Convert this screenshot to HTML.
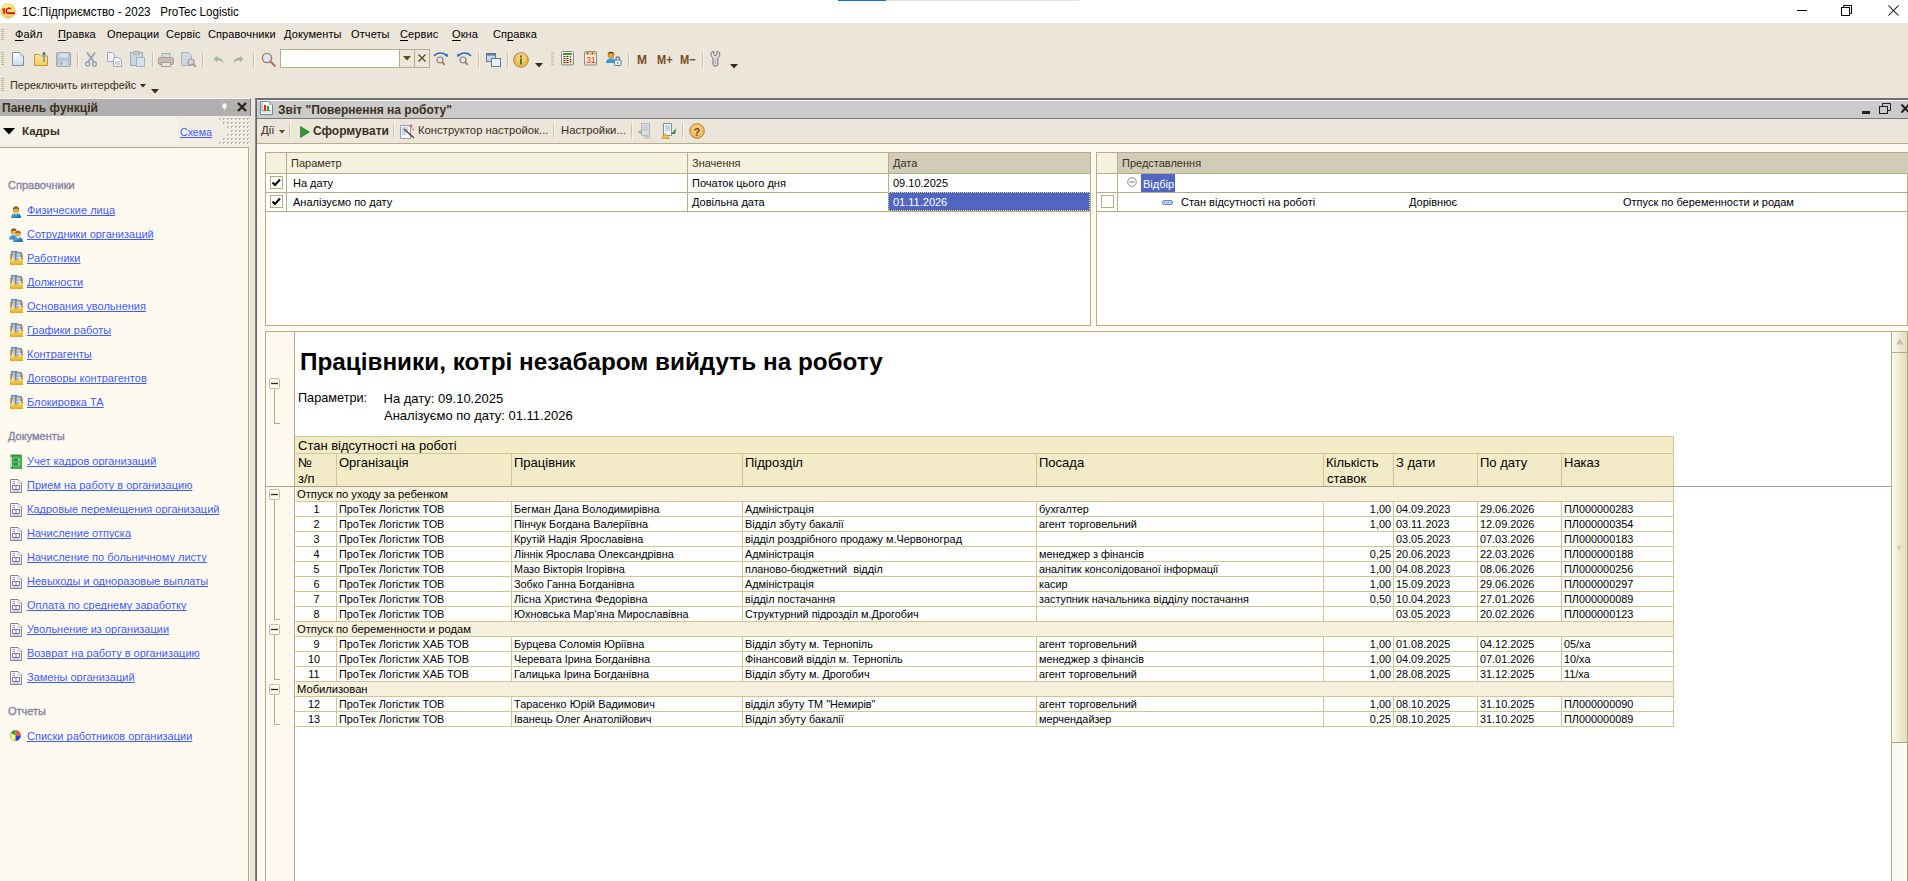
<!DOCTYPE html><html><head><meta charset='utf-8'><style>
*{margin:0;padding:0;box-sizing:border-box}
html,body{width:1908px;height:881px;overflow:hidden;background:#ECE5DA;font-family:"Liberation Sans",sans-serif}
body>div,div.a{position:absolute}
div{position:absolute}
.t{white-space:nowrap;line-height:1}
u{text-underline-offset:2px}
.ui{font-size:11px;color:#000}
.lnk{color:#3030E0;text-decoration:underline;font-size:11px}
</style></head><body><div style="left:0px;top:0px;width:1908px;height:23px;background:#fff"></div>
<div style="left:838px;top:0px;width:48px;height:1px;background:#0B6FD8"></div>
<div style="left:886px;top:0px;width:193px;height:1px;background:#E0E0E0"></div>
<svg style="position:absolute;left:0;top:3px" width="17" height="17" viewBox="0 0 17 17"><defs><radialGradient id="g1c" cx="0.45" cy="0.35" r="0.6"><stop offset="0" stop-color="#FFFDE0"/><stop offset="0.5" stop-color="#F8EC60"/><stop offset="1" stop-color="#E8C870"/></radialGradient></defs><circle cx="8" cy="8" r="7.4" fill="url(#g1c)" stroke="#D8C890" stroke-width="0.6"/><path d="M2.2 6L4.8 4.8V11H3.2V7L2.2 7.4Z" fill="#E81010"/><path d="M10.8 6.2A2.6 2.6 0 1 0 8.5 10.4" fill="none" stroke="#E81010" stroke-width="1.7"/><rect x="8" y="9.3" width="7" height="1.8" fill="#E80000"/></svg>
<div class="t" style="left:22px;top:5.7px;font-size:12.5px;color:#000;transform:scaleX(0.928);transform-origin:left">1С:Підприємство - 2023&nbsp;&nbsp; ProTec Logistic</div>
<div style="left:1797px;top:10px;width:10px;height:1px;background:#000"></div>
<svg style="position:absolute;left:1841px;top:5px" width="12" height="12" viewBox="0 0 12 12"><rect x="0.5" y="2.5" width="8" height="8" fill="none" stroke="#000"/><path d="M2.5 2.5V0.5H10.5V8.5H8.5" fill="none" stroke="#000"/></svg>
<svg style="position:absolute;left:1888px;top:5px" width="11" height="11" viewBox="0 0 11 11"><path d="M0.5 0.5L10.5 10.5M10.5 0.5L0.5 10.5" stroke="#000" stroke-width="1.05"/></svg>
<div style="left:1px;top:29px;width:3px;height:1px;background:#BDB494"></div>
<div style="left:1px;top:31px;width:3px;height:1px;background:#BDB494"></div>
<div style="left:1px;top:33px;width:3px;height:1px;background:#BDB494"></div>
<div style="left:1px;top:35px;width:3px;height:1px;background:#BDB494"></div>
<div style="left:1px;top:37px;width:3px;height:1px;background:#BDB494"></div>
<div style="left:1px;top:39px;width:3px;height:1px;background:#BDB494"></div>
<div class="t" style="left:15px;top:29px;font-size:11px;color:#000;letter-spacing:0.1px"><u>Ф</u>айл</div>
<div class="t" style="left:58px;top:29px;font-size:11px;color:#000;letter-spacing:0.1px"><u>П</u>равка</div>
<div class="t" style="left:107px;top:29px;font-size:11px;color:#000;letter-spacing:0.1px">Операции</div>
<div class="t" style="left:166px;top:29px;font-size:11px;color:#000;letter-spacing:0.1px">Сервіс</div>
<div class="t" style="left:208px;top:29px;font-size:11px;color:#000;letter-spacing:0.1px">Справочники</div>
<div class="t" style="left:284px;top:29px;font-size:11px;color:#000;letter-spacing:0.1px">Документы</div>
<div class="t" style="left:351px;top:29px;font-size:11px;color:#000;letter-spacing:0.1px">Отчеты</div>
<div class="t" style="left:400px;top:29px;font-size:11px;color:#000;letter-spacing:0.1px"><u>С</u>ервис</div>
<div class="t" style="left:452px;top:29px;font-size:11px;color:#000;letter-spacing:0.1px"><u>О</u>кна</div>
<div class="t" style="left:493px;top:29px;font-size:11px;color:#000;letter-spacing:0.1px">Сп<u>р</u>авка</div>
<svg style="position:absolute;left:12px;top:52px" width="12" height="14" viewBox="0 0 12 14"><defs><linearGradient id="nd" x1="0" y1="0" x2="0" y2="1"><stop offset="0" stop-color="#FFFFFF"/><stop offset="1" stop-color="#C8DCEC"/></linearGradient></defs><path d="M0.5 0.5H8L11.5 4V13.5H0.5Z" fill="url(#nd)" stroke="#7A90A8"/><path d="M8 0.5V4H11.5" fill="#D8E4EE" stroke="#9AB0C4" stroke-width="0.8"/></svg>
<svg style="position:absolute;left:34px;top:51px" width="15" height="15" viewBox="0 0 15 15"><defs><linearGradient id="fd" x1="0" y1="0" x2="0" y2="1"><stop offset="0" stop-color="#FBE9A8"/><stop offset="1" stop-color="#F0CC58"/></linearGradient></defs><path d="M0.5 3.5H5L6.5 5H13.5V14.5H0.5Z" fill="url(#fd)" stroke="#C8982E"/><path d="M10 11V1.2" stroke="#3A6A90" stroke-width="1"/><path d="M7.8 3.4L10 0.8L12.2 3.4Z" fill="#3A6A90"/></svg>
<svg style="position:absolute;left:56px;top:52px" width="15" height="15" viewBox="0 0 15 15"><rect x="0.5" y="0.5" width="14" height="14" rx="1" fill="#B4C4D4" stroke="#9AAABA"/><rect x="3" y="1.5" width="9" height="4" fill="#D8E2EA"/><rect x="3" y="9" width="9" height="5" fill="#D0D8E0"/><rect x="4.5" y="10" width="2" height="3" fill="#9AAABA"/></svg>
<div style="left:77px;top:50px;width:1px;height:20px;background:linear-gradient(#ECE5DA,#C9BFA0 30%,#C9BFA0 70%,#ECE5DA)"></div>
<div style="left:78px;top:50px;width:1px;height:20px;background:#FFFFFF80"></div>
<svg style="position:absolute;left:85px;top:52px" width="12" height="15" viewBox="0 0 12 15"><path d="M2 0.5L9 10M10 0.5L3 10" stroke="#8AA0B4" stroke-width="1.6" fill="none"/><circle cx="2.6" cy="12" r="2" fill="none" stroke="#8AA0B4" stroke-width="1.3"/><circle cx="9.4" cy="12" r="2" fill="none" stroke="#8AA0B4" stroke-width="1.3"/></svg>
<svg style="position:absolute;left:107px;top:52px" width="15" height="15" viewBox="0 0 15 15"><path d="M0.5 0.5H5.5L7.5 2.5V9.5H0.5Z" fill="#F2F4F6" stroke="#9AAABA"/><path d="M6.5 5.5H11.5L14.5 8.5V14.5H6.5Z" fill="#F2F4F6" stroke="#9AAABA"/><path d="M8 10H13M8 12H13" stroke="#A8B4C0"/></svg>
<svg style="position:absolute;left:130px;top:51px" width="15" height="16" viewBox="0 0 15 16"><rect x="0.5" y="1.5" width="12" height="13" fill="#C8D4E0" stroke="#9AAABA"/><rect x="4" y="0.5" width="5" height="2.5" fill="#D8D8B8" stroke="#A8A890"/><rect x="6.5" y="6.5" width="8" height="9" fill="#D8E2EA" stroke="#9ABAC0"/></svg>
<div style="left:152px;top:50px;width:1px;height:20px;background:linear-gradient(#ECE5DA,#C9BFA0 30%,#C9BFA0 70%,#ECE5DA)"></div>
<div style="left:153px;top:50px;width:1px;height:20px;background:#FFFFFF80"></div>
<svg style="position:absolute;left:158px;top:53px" width="16" height="14" viewBox="0 0 16 14"><rect x="4" y="0.5" width="8" height="4" fill="#D4DCE4" stroke="#A0AAB4"/><rect x="0.5" y="4.5" width="15" height="7" rx="1.5" fill="#C8BCB0" stroke="#A8A098"/><rect x="3.5" y="9.5" width="9" height="4" fill="#E8E4E0" stroke="#A8A098"/></svg>
<svg style="position:absolute;left:181px;top:52px" width="16" height="15" viewBox="0 0 16 15"><path d="M0.5 0.5H7.5L10.5 3.5V13.5H0.5Z" fill="#D0D8E0" stroke="#A8B4C0"/><circle cx="10" cy="10" r="3" fill="#C8D8E8" stroke="#B09080" stroke-width="1.2"/><path d="M12 12L15 15" stroke="#B09080" stroke-width="1.8"/></svg>
<div style="left:202px;top:50px;width:1px;height:20px;background:linear-gradient(#ECE5DA,#C9BFA0 30%,#C9BFA0 70%,#ECE5DA)"></div>
<div style="left:203px;top:50px;width:1px;height:20px;background:#FFFFFF80"></div>
<svg style="position:absolute;left:213px;top:55px" width="11" height="9" viewBox="0 0 11 9"><path d="M4 0.5L0.5 4L4 7.5V5.5C7 5.5 9 6 10.5 8.5C10 4.5 8 2.5 4 2.5Z" fill="#A8B8A0"/></svg>
<svg style="position:absolute;left:233px;top:55px" width="11" height="9" viewBox="0 0 11 9"><path d="M7 0.5L10.5 4L7 7.5V5.5C4 5.5 2 6 0.5 8.5C1 4.5 3 2.5 7 2.5Z" fill="#A8B8A0"/></svg>
<div style="left:253px;top:50px;width:1px;height:20px;background:linear-gradient(#ECE5DA,#C9BFA0 30%,#C9BFA0 70%,#ECE5DA)"></div>
<div style="left:254px;top:50px;width:1px;height:20px;background:#FFFFFF80"></div>
<svg style="position:absolute;left:261px;top:52px" width="15" height="15" viewBox="0 0 15 15"><circle cx="6" cy="6" r="4.6" fill="#D8E8F8" stroke="#B07858" stroke-width="1.4"/><path d="M9.5 9.5L13.8 13.8" stroke="#B07858" stroke-width="2.2" stroke-linecap="round"/></svg>
<div style="left:280px;top:49px;width:120px;height:19px;background:#fff;border:1px solid #B5AC88"></div>
<div style="left:399px;top:49px;width:16px;height:19px;border:1px solid #B5AC88"></div>
<svg style="position:absolute;left:403px;top:56px" width="8" height="5" viewBox="0 0 8 5"><path d="M0 0H8L4 4.5Z" fill="#5A4A20"/></svg>
<div style="left:414px;top:49px;width:16px;height:19px;border:1px solid #B5AC88"></div>
<svg style="position:absolute;left:418px;top:54px" width="8" height="8" viewBox="0 0 8 8"><path d="M0.5 0.5L7.5 7.5M7.5 0.5L0.5 7.5" stroke="#5A4A20" stroke-width="1.3"/></svg>
<svg style="position:absolute;left:433px;top:51px" width="16" height="16" viewBox="0 0 16 16"><path d="M1 5C4 1 11 1 14 5" fill="none" stroke="#2A70C8" stroke-width="1.3"/><path d="M15 6L14.5 2.5L11.5 4.5Z" fill="#2A70C8"/><circle cx="7" cy="9" r="3" fill="#D8E8F8" stroke="#9A7A68" stroke-width="1.2"/><path d="M9.2 11.2L11.8 13.8" stroke="#9A7A68" stroke-width="1.8"/></svg>
<svg style="position:absolute;left:456px;top:51px" width="16" height="16" viewBox="0 0 16 16"><path d="M2 5C5 1 12 1 15 5" fill="none" stroke="#2A70C8" stroke-width="1.3"/><path d="M1 6L1.5 2.5L4.5 4.5Z" fill="#2A70C8"/><circle cx="7" cy="9" r="3" fill="#D8E8F8" stroke="#9A7A68" stroke-width="1.2"/><path d="M9.2 11.2L11.8 13.8" stroke="#9A7A68" stroke-width="1.8"/></svg>
<div style="left:478px;top:50px;width:1px;height:20px;background:linear-gradient(#ECE5DA,#C9BFA0 30%,#C9BFA0 70%,#ECE5DA)"></div>
<div style="left:479px;top:50px;width:1px;height:20px;background:#FFFFFF80"></div>
<svg style="position:absolute;left:486px;top:53px" width="15" height="14" viewBox="0 0 15 14"><rect x="0.5" y="0.5" width="9" height="8" fill="#C8D8E8" stroke="#5A7A9A"/><rect x="0.5" y="0.5" width="9" height="2" fill="#5A7A9A"/><rect x="5.5" y="5.5" width="9" height="8" fill="#E8F0F8" stroke="#5A7A9A"/></svg>
<div style="left:507px;top:50px;width:1px;height:20px;background:linear-gradient(#ECE5DA,#C9BFA0 30%,#C9BFA0 70%,#ECE5DA)"></div>
<div style="left:508px;top:50px;width:1px;height:20px;background:#FFFFFF80"></div>
<svg style="position:absolute;left:513px;top:52px" width="16" height="16" viewBox="0 0 16 16"><circle cx="8" cy="8" r="7.3" fill="#F2B850" stroke="#A88440"/><circle cx="8" cy="6" r="5" fill="#F8D890" opacity="0.6"/><rect x="7" y="6.5" width="2" height="6" fill="#2C8A2C"/><rect x="7" y="3.5" width="2" height="2" fill="#2C8A2C"/></svg>
<svg style="position:absolute;left:535px;top:63px" width="8" height="5" viewBox="0 0 8 5"><path d="M0 0H8L4 4.5Z" fill="#3A2A10"/></svg>
<div style="left:551px;top:52px;width:3px;height:1px;background:#C8C0A0"></div>
<div style="left:551px;top:54px;width:3px;height:1px;background:#C8C0A0"></div>
<div style="left:551px;top:56px;width:3px;height:1px;background:#C8C0A0"></div>
<div style="left:551px;top:58px;width:3px;height:1px;background:#C8C0A0"></div>
<div style="left:551px;top:60px;width:3px;height:1px;background:#C8C0A0"></div>
<div style="left:551px;top:62px;width:3px;height:1px;background:#C8C0A0"></div>
<div style="left:551px;top:64px;width:3px;height:1px;background:#C8C0A0"></div>
<svg style="position:absolute;left:561px;top:51px" width="14" height="15" viewBox="0 0 14 15"><defs><linearGradient id="cg" x1="0" y1="0" x2="0" y2="1"><stop offset="0" stop-color="#FFFFFF"/><stop offset="1" stop-color="#F8D8A8"/></linearGradient></defs><rect x="0.5" y="0.5" width="12" height="13.5" rx="1" fill="url(#cg)" stroke="#7A8A98"/><rect x="2" y="2" width="9" height="2" fill="#3A9A2A"/><path d="M2.5 5.5H4.5M5.5 5.5H7.5M2.5 7.5H4.5M5.5 7.5H7.5M2.5 9.5H4.5M5.5 9.5H7.5M2.5 11.5H4.5M5.5 11.5H7.5" stroke="#302820" stroke-width="1"/><path d="M9.5 5V6.5" stroke="#E02020" stroke-width="1.2"/><circle cx="9.5" cy="8.5" r="0.8" fill="#302820"/><circle cx="9.5" cy="10.5" r="0.8" fill="#302820"/></svg>
<svg style="position:absolute;left:584px;top:51px" width="13" height="15" viewBox="0 0 13 15"><defs><linearGradient id="kg" x1="0" y1="0" x2="0" y2="1"><stop offset="0" stop-color="#FFFFFF"/><stop offset="1" stop-color="#F8DCB0"/></linearGradient></defs><rect x="0.5" y="0.5" width="12" height="13.5" rx="1" fill="url(#kg)" stroke="#8A9098"/><rect x="1" y="1" width="11" height="3" fill="#F0C070"/><circle cx="3.5" cy="2.3" r="0.7" fill="#503010"/><circle cx="8.5" cy="2.3" r="0.7" fill="#503010"/><text x="2.2" y="12.2" font-family="Liberation Sans" font-size="8.5" fill="#E83020" transform="scale(1,1.1)" transform-origin="0 12">31</text></svg>
<svg style="position:absolute;left:606px;top:51px" width="16" height="15" viewBox="0 0 16 15"><defs><radialGradient id="hg" cx="0.5" cy="0.6" r="0.6"><stop offset="0" stop-color="#F8C050"/><stop offset="1" stop-color="#B86810"/></radialGradient></defs><circle cx="5" cy="4" r="3.3" fill="url(#hg)"/><path d="M1.8 3C2 0.5 8 0.5 8.2 3C7 1.8 3 1.8 1.8 3Z" fill="#201008"/><path d="M0 12C0.3 8.5 2 7.6 5 7.6C8 7.6 9 8.2 9 10V12Z" fill="#3898D8"/><rect x="8.5" y="9" width="6.5" height="5.5" rx="0.8" fill="#E8F0F8" stroke="#5A7890"/><path d="M10 9V7.2C10 5.5 13.5 5.5 13.5 7.2V9" fill="none" stroke="#5A7890" stroke-width="1.3"/><path d="M11.75 11V13" stroke="#5A7890"/></svg>
<div style="left:628px;top:50px;width:1px;height:20px;background:linear-gradient(#ECE5DA,#C9BFA0 30%,#C9BFA0 70%,#ECE5DA)"></div>
<div style="left:629px;top:50px;width:1px;height:20px;background:#FFFFFF80"></div>
<div class="t" style="left:636.5px;top:53px;font-size:13px;font-weight:bold;color:#7A4A20;transform:scaleX(0.92);transform-origin:left">M</div>
<div class="t" style="left:656.5px;top:53px;font-size:13px;font-weight:bold;color:#7A4A20;transform:scaleX(0.85);transform-origin:left">M+</div>
<div class="t" style="left:679.5px;top:53px;font-size:13px;font-weight:bold;color:#7A4A20;transform:scaleX(0.85);transform-origin:left">M&minus;</div>
<div style="left:702px;top:50px;width:1px;height:20px;background:linear-gradient(#ECE5DA,#C9BFA0 30%,#C9BFA0 70%,#ECE5DA)"></div>
<div style="left:703px;top:50px;width:1px;height:20px;background:#FFFFFF80"></div>
<svg style="position:absolute;left:710px;top:51px" width="11" height="16" viewBox="0 0 11 16"><defs><linearGradient id="wg" x1="0" y1="0" x2="1" y2="0"><stop offset="0" stop-color="#F4F4F4"/><stop offset="0.5" stop-color="#D8D8D8"/><stop offset="1" stop-color="#F0F0F0"/></linearGradient></defs><path d="M1 3.2C1 1.2 2.5 0.5 3.8 0.5V3.8C3.8 4.8 6.8 4.8 6.8 3.8V0.5C8.2 0.5 9.8 1.2 9.8 3.2C9.8 5 8.8 6.3 7.8 7V13.8C7.8 15.5 3 15.5 3 13.8V7C2 6.3 1 5 1 3.2Z" fill="url(#wg)" stroke="#6A6A6A" stroke-width="1"/><path d="M5.4 9V13" stroke="#B0B0B0" stroke-width="1.2"/></svg>
<svg style="position:absolute;left:730px;top:63.5px" width="8" height="5" viewBox="0 0 8 5"><path d="M0 0H8L4 4.5Z" fill="#3A2A10"/></svg>
<svg style="position:absolute;left:140px;top:84px" width="6" height="4" viewBox="0 0 6 4"><path d="M0 0H6L3 3.5Z" fill="#3A2A10"/></svg>
<svg style="position:absolute;left:151px;top:89px" width="8" height="5" viewBox="0 0 8 5"><path d="M0 0H8L4 4.5Z" fill="#3A2A10"/></svg>
<div style="left:1px;top:52px;width:3px;height:1px;background:#BDB494"></div>
<div style="left:1px;top:54px;width:3px;height:1px;background:#BDB494"></div>
<div style="left:1px;top:56px;width:3px;height:1px;background:#BDB494"></div>
<div style="left:1px;top:58px;width:3px;height:1px;background:#BDB494"></div>
<div style="left:1px;top:60px;width:3px;height:1px;background:#BDB494"></div>
<div style="left:1px;top:62px;width:3px;height:1px;background:#BDB494"></div>
<div style="left:1px;top:64px;width:3px;height:1px;background:#BDB494"></div>
<div style="left:1px;top:78px;width:3px;height:1px;background:#BDB494"></div>
<div style="left:1px;top:80px;width:3px;height:1px;background:#BDB494"></div>
<div style="left:1px;top:82px;width:3px;height:1px;background:#BDB494"></div>
<div style="left:1px;top:84px;width:3px;height:1px;background:#BDB494"></div>
<div style="left:1px;top:86px;width:3px;height:1px;background:#BDB494"></div>
<div style="left:1px;top:88px;width:3px;height:1px;background:#BDB494"></div>
<div style="left:1px;top:90px;width:3px;height:1px;background:#BDB494"></div>
<div class="t" style="left:10px;top:80px;font-size:10.9px;color:#3A3020">Переключить интерфейс</div>
<div style="left:0px;top:98px;width:251px;height:18px;background:#B0B0B0;border-top:1px solid #F2F0EC;border-right:1px solid #808080"></div>
<div class="t" style="left:2px;top:102px;font-size:12px;font-weight:bold;color:#3A3020">Панель функцій</div>
<svg style="position:absolute;left:237px;top:101.5px" width="10" height="10" viewBox="0 0 10 10"><path d="M1 1L9 9M9 1L1 9" stroke="#2A2010" stroke-width="2.2"/></svg>
<svg style="position:absolute;left:222px;top:103px" width="5" height="8" viewBox="0 0 5 8"><rect x="0.5" y="0.5" width="4" height="5" rx="1.5" fill="#F8F8F8" stroke="#E0E0E0" stroke-width="0.5"/><rect x="2" y="5.5" width="1" height="2" fill="#E8E8E8"/></svg>
<div style="left:0px;top:116px;width:249px;height:31px;background:#F1EDE3"></div>
<div style="left:0px;top:116px;width:178px;height:30px;background:#F4F1E9;border-radius:0 3px 3px 0"></div>
<div style="left:247px;top:118px;width:2px;height:2px;background:#B4B0A6"></div>
<div style="left:248px;top:119px;width:1px;height:1px;background:#FFFFFF"></div>
<div style="left:243px;top:118px;width:2px;height:2px;background:#B4B0A6"></div>
<div style="left:244px;top:119px;width:1px;height:1px;background:#FFFFFF"></div>
<div style="left:239px;top:118px;width:2px;height:2px;background:#B4B0A6"></div>
<div style="left:240px;top:119px;width:1px;height:1px;background:#FFFFFF"></div>
<div style="left:235px;top:118px;width:2px;height:2px;background:#B4B0A6"></div>
<div style="left:236px;top:119px;width:1px;height:1px;background:#FFFFFF"></div>
<div style="left:231px;top:118px;width:2px;height:2px;background:#B4B0A6"></div>
<div style="left:232px;top:119px;width:1px;height:1px;background:#FFFFFF"></div>
<div style="left:227px;top:118px;width:2px;height:2px;background:#B4B0A6"></div>
<div style="left:228px;top:119px;width:1px;height:1px;background:#FFFFFF"></div>
<div style="left:223px;top:118px;width:2px;height:2px;background:#B4B0A6"></div>
<div style="left:224px;top:119px;width:1px;height:1px;background:#FFFFFF"></div>
<div style="left:219px;top:118px;width:2px;height:2px;background:#B4B0A6"></div>
<div style="left:220px;top:119px;width:1px;height:1px;background:#FFFFFF"></div>
<div style="left:247px;top:122px;width:2px;height:2px;background:#B4B0A6"></div>
<div style="left:248px;top:123px;width:1px;height:1px;background:#FFFFFF"></div>
<div style="left:243px;top:122px;width:2px;height:2px;background:#B4B0A6"></div>
<div style="left:244px;top:123px;width:1px;height:1px;background:#FFFFFF"></div>
<div style="left:239px;top:122px;width:2px;height:2px;background:#B4B0A6"></div>
<div style="left:240px;top:123px;width:1px;height:1px;background:#FFFFFF"></div>
<div style="left:235px;top:122px;width:2px;height:2px;background:#B4B0A6"></div>
<div style="left:236px;top:123px;width:1px;height:1px;background:#FFFFFF"></div>
<div style="left:231px;top:122px;width:2px;height:2px;background:#B4B0A6"></div>
<div style="left:232px;top:123px;width:1px;height:1px;background:#FFFFFF"></div>
<div style="left:227px;top:122px;width:2px;height:2px;background:#B4B0A6"></div>
<div style="left:228px;top:123px;width:1px;height:1px;background:#FFFFFF"></div>
<div style="left:223px;top:122px;width:2px;height:2px;background:#B4B0A6"></div>
<div style="left:224px;top:123px;width:1px;height:1px;background:#FFFFFF"></div>
<div style="left:247px;top:126px;width:2px;height:2px;background:#B4B0A6"></div>
<div style="left:248px;top:127px;width:1px;height:1px;background:#FFFFFF"></div>
<div style="left:243px;top:126px;width:2px;height:2px;background:#B4B0A6"></div>
<div style="left:244px;top:127px;width:1px;height:1px;background:#FFFFFF"></div>
<div style="left:239px;top:126px;width:2px;height:2px;background:#B4B0A6"></div>
<div style="left:240px;top:127px;width:1px;height:1px;background:#FFFFFF"></div>
<div style="left:235px;top:126px;width:2px;height:2px;background:#B4B0A6"></div>
<div style="left:236px;top:127px;width:1px;height:1px;background:#FFFFFF"></div>
<div style="left:231px;top:126px;width:2px;height:2px;background:#B4B0A6"></div>
<div style="left:232px;top:127px;width:1px;height:1px;background:#FFFFFF"></div>
<div style="left:227px;top:126px;width:2px;height:2px;background:#B4B0A6"></div>
<div style="left:228px;top:127px;width:1px;height:1px;background:#FFFFFF"></div>
<div style="left:247px;top:130px;width:2px;height:2px;background:#B4B0A6"></div>
<div style="left:248px;top:131px;width:1px;height:1px;background:#FFFFFF"></div>
<div style="left:243px;top:130px;width:2px;height:2px;background:#B4B0A6"></div>
<div style="left:244px;top:131px;width:1px;height:1px;background:#FFFFFF"></div>
<div style="left:239px;top:130px;width:2px;height:2px;background:#B4B0A6"></div>
<div style="left:240px;top:131px;width:1px;height:1px;background:#FFFFFF"></div>
<div style="left:235px;top:130px;width:2px;height:2px;background:#B4B0A6"></div>
<div style="left:236px;top:131px;width:1px;height:1px;background:#FFFFFF"></div>
<div style="left:231px;top:130px;width:2px;height:2px;background:#B4B0A6"></div>
<div style="left:232px;top:131px;width:1px;height:1px;background:#FFFFFF"></div>
<div style="left:247px;top:134px;width:2px;height:2px;background:#B4B0A6"></div>
<div style="left:248px;top:135px;width:1px;height:1px;background:#FFFFFF"></div>
<div style="left:243px;top:134px;width:2px;height:2px;background:#B4B0A6"></div>
<div style="left:244px;top:135px;width:1px;height:1px;background:#FFFFFF"></div>
<div style="left:239px;top:134px;width:2px;height:2px;background:#B4B0A6"></div>
<div style="left:240px;top:135px;width:1px;height:1px;background:#FFFFFF"></div>
<div style="left:235px;top:134px;width:2px;height:2px;background:#B4B0A6"></div>
<div style="left:236px;top:135px;width:1px;height:1px;background:#FFFFFF"></div>
<div style="left:231px;top:134px;width:2px;height:2px;background:#B4B0A6"></div>
<div style="left:232px;top:135px;width:1px;height:1px;background:#FFFFFF"></div>
<div style="left:227px;top:134px;width:2px;height:2px;background:#B4B0A6"></div>
<div style="left:228px;top:135px;width:1px;height:1px;background:#FFFFFF"></div>
<div style="left:247px;top:138px;width:2px;height:2px;background:#B4B0A6"></div>
<div style="left:248px;top:139px;width:1px;height:1px;background:#FFFFFF"></div>
<div style="left:243px;top:138px;width:2px;height:2px;background:#B4B0A6"></div>
<div style="left:244px;top:139px;width:1px;height:1px;background:#FFFFFF"></div>
<div style="left:239px;top:138px;width:2px;height:2px;background:#B4B0A6"></div>
<div style="left:240px;top:139px;width:1px;height:1px;background:#FFFFFF"></div>
<div style="left:235px;top:138px;width:2px;height:2px;background:#B4B0A6"></div>
<div style="left:236px;top:139px;width:1px;height:1px;background:#FFFFFF"></div>
<div style="left:231px;top:138px;width:2px;height:2px;background:#B4B0A6"></div>
<div style="left:232px;top:139px;width:1px;height:1px;background:#FFFFFF"></div>
<div style="left:227px;top:138px;width:2px;height:2px;background:#B4B0A6"></div>
<div style="left:228px;top:139px;width:1px;height:1px;background:#FFFFFF"></div>
<div style="left:223px;top:138px;width:2px;height:2px;background:#B4B0A6"></div>
<div style="left:224px;top:139px;width:1px;height:1px;background:#FFFFFF"></div>
<div style="left:247px;top:142px;width:2px;height:2px;background:#B4B0A6"></div>
<div style="left:248px;top:143px;width:1px;height:1px;background:#FFFFFF"></div>
<div style="left:243px;top:142px;width:2px;height:2px;background:#B4B0A6"></div>
<div style="left:244px;top:143px;width:1px;height:1px;background:#FFFFFF"></div>
<div style="left:239px;top:142px;width:2px;height:2px;background:#B4B0A6"></div>
<div style="left:240px;top:143px;width:1px;height:1px;background:#FFFFFF"></div>
<div style="left:235px;top:142px;width:2px;height:2px;background:#B4B0A6"></div>
<div style="left:236px;top:143px;width:1px;height:1px;background:#FFFFFF"></div>
<div style="left:231px;top:142px;width:2px;height:2px;background:#B4B0A6"></div>
<div style="left:232px;top:143px;width:1px;height:1px;background:#FFFFFF"></div>
<div style="left:227px;top:142px;width:2px;height:2px;background:#B4B0A6"></div>
<div style="left:228px;top:143px;width:1px;height:1px;background:#FFFFFF"></div>
<div style="left:223px;top:142px;width:2px;height:2px;background:#B4B0A6"></div>
<div style="left:224px;top:143px;width:1px;height:1px;background:#FFFFFF"></div>
<div style="left:219px;top:142px;width:2px;height:2px;background:#B4B0A6"></div>
<div style="left:220px;top:143px;width:1px;height:1px;background:#FFFFFF"></div>
<div style="left:0px;top:147px;width:249px;height:734px;background:#FFFAF0;border-top:1px solid #B5AC88;border-right:1px solid #B5AC88"></div>
<svg style="position:absolute;left:3px;top:128px" width="12" height="7" viewBox="0 0 12 7"><path d="M0 0H12L6 6.5Z" fill="#000"/></svg>
<div class="t" style="left:22px;top:126px;font-size:11.5px;font-weight:bold;color:#3A3020">Кадры</div>
<div class="t" style="left:180px;top:127px;font-size:10.6px;color:#3F5CFF;text-decoration:underline;text-decoration-skip-ink:none">Схема</div>
<div class="t" style="left:8px;top:180px;font-size:11px;color:#8684A4;-webkit-text-stroke:0.35px #8684A4">Справочники</div>
<div class="t" style="left:27px;top:205px;font-size:11px;color:#3F5CFF;text-decoration:underline;text-decoration-skip-ink:none">Физические лица</div>
<svg style="position:absolute;left:11px;top:206px" width="11" height="12" viewBox="0 0 11 12"><defs><radialGradient id="ph" cx="0.5" cy="0.65" r="0.6"><stop offset="0" stop-color="#F8C868"/><stop offset="1" stop-color="#C07010"/></radialGradient><linearGradient id="pb" x1="0" y1="0" x2="1" y2="1"><stop offset="0" stop-color="#70C0E8"/><stop offset="1" stop-color="#1060A0"/></linearGradient></defs><ellipse cx="5" cy="3.6" rx="3.1" ry="3.4" fill="url(#ph)"/><path d="M1.9 3.6C1.9 0.8 8.1 0.8 8.1 3.6C7.6 1.8 2.4 1.8 1.9 3.6Z" fill="#281808"/><path d="M0 12C0 8.6 1.6 7 5 7C8.4 7 10 8.6 10 12Z" fill="url(#pb)"/><path d="M3.3 7L5 8.6L6.7 7Z" fill="#fff"/></svg>
<div class="t" style="left:27px;top:229px;font-size:11px;color:#3F5CFF;text-decoration:underline;text-decoration-skip-ink:none">Сотрудники организаций</div>
<svg style="position:absolute;left:9px;top:228px" width="15" height="14" viewBox="0 0 15 14"><g transform="translate(0,0)"><ellipse cx="4.8" cy="3.4" rx="2.9" ry="3.2" fill="url(#ph)"/><path d="M1.9 3.4C1.9 0.8 7.7 0.8 7.7 3.4C7.2 1.7 2.4 1.7 1.9 3.4Z" fill="#281808"/><path d="M0 11.5C0 8.5 1.5 7 4.5 7C6.5 7 7.5 7.5 8.5 8.5V11.5Z" fill="url(#pb)"/></g><g transform="translate(4,2)"><ellipse cx="5" cy="3.6" rx="3.1" ry="3.4" fill="url(#ph)" stroke="#FFFAF0" stroke-width="0.6"/><path d="M1.9 3.6C1.9 0.8 8.1 0.8 8.1 3.6C7.6 1.8 2.4 1.8 1.9 3.6Z" fill="#281808"/><path d="M0 12C0 8.6 1.6 7 5 7C8.4 7 10 8.6 10 12Z" fill="url(#pb)"/><path d="M3.3 7L5 8.6L6.7 7Z" fill="#fff"/></g></svg>
<div class="t" style="left:27px;top:253px;font-size:11px;color:#3F5CFF;text-decoration:underline;text-decoration-skip-ink:none">Работники</div>
<svg style="position:absolute;left:9px;top:251px" width="15" height="14" viewBox="0 0 15 14"><defs><linearGradient id="tg" x1="0" y1="0" x2="0" y2="1"><stop offset="0" stop-color="#FCE050"/><stop offset="1" stop-color="#DCA428"/></linearGradient></defs><rect x="1" y="3" width="1.6" height="7" fill="#F0A830"/><rect x="12.4" y="3" width="1.6" height="7" fill="#F0A830"/><rect x="2.5" y="0.5" width="5.5" height="9" fill="#fff" stroke="#7A8A9C"/><rect x="3" y="1" width="4.5" height="4.5" fill="#8C9CAC"/><path d="M3.8 2.2H5.8M3.8 4.2H5.8" stroke="#F0F4F8" stroke-width="0.9"/><rect x="6.5" y="1.5" width="6" height="8" fill="#fff" stroke="#7A8A9C"/><rect x="7" y="2" width="5" height="4" fill="#8C9CAC"/><path d="M7.8 3.2H11.2M7.8 5H11.2" stroke="#F0F4F8" stroke-width="0.9"/><path d="M4 7C6 6.6 9 7 11 7.5M5 8.5L10 9" stroke="#A098E0" stroke-width="1"/><path d="M1 8.5H5L6 9.5H9L10 8.5H14V14H1Z" fill="url(#tg)"/></svg>
<div class="t" style="left:27px;top:277px;font-size:11px;color:#3F5CFF;text-decoration:underline;text-decoration-skip-ink:none">Должности</div>
<svg style="position:absolute;left:9px;top:275px" width="15" height="14" viewBox="0 0 15 14"><defs><linearGradient id="tg" x1="0" y1="0" x2="0" y2="1"><stop offset="0" stop-color="#FCE050"/><stop offset="1" stop-color="#DCA428"/></linearGradient></defs><rect x="1" y="3" width="1.6" height="7" fill="#F0A830"/><rect x="12.4" y="3" width="1.6" height="7" fill="#F0A830"/><rect x="2.5" y="0.5" width="5.5" height="9" fill="#fff" stroke="#7A8A9C"/><rect x="3" y="1" width="4.5" height="4.5" fill="#8C9CAC"/><path d="M3.8 2.2H5.8M3.8 4.2H5.8" stroke="#F0F4F8" stroke-width="0.9"/><rect x="6.5" y="1.5" width="6" height="8" fill="#fff" stroke="#7A8A9C"/><rect x="7" y="2" width="5" height="4" fill="#8C9CAC"/><path d="M7.8 3.2H11.2M7.8 5H11.2" stroke="#F0F4F8" stroke-width="0.9"/><path d="M4 7C6 6.6 9 7 11 7.5M5 8.5L10 9" stroke="#A098E0" stroke-width="1"/><path d="M1 8.5H5L6 9.5H9L10 8.5H14V14H1Z" fill="url(#tg)"/></svg>
<div class="t" style="left:27px;top:301px;font-size:11px;color:#3F5CFF;text-decoration:underline;text-decoration-skip-ink:none">Основания увольнения</div>
<svg style="position:absolute;left:9px;top:299px" width="15" height="14" viewBox="0 0 15 14"><defs><linearGradient id="tg" x1="0" y1="0" x2="0" y2="1"><stop offset="0" stop-color="#FCE050"/><stop offset="1" stop-color="#DCA428"/></linearGradient></defs><rect x="1" y="3" width="1.6" height="7" fill="#F0A830"/><rect x="12.4" y="3" width="1.6" height="7" fill="#F0A830"/><rect x="2.5" y="0.5" width="5.5" height="9" fill="#fff" stroke="#7A8A9C"/><rect x="3" y="1" width="4.5" height="4.5" fill="#8C9CAC"/><path d="M3.8 2.2H5.8M3.8 4.2H5.8" stroke="#F0F4F8" stroke-width="0.9"/><rect x="6.5" y="1.5" width="6" height="8" fill="#fff" stroke="#7A8A9C"/><rect x="7" y="2" width="5" height="4" fill="#8C9CAC"/><path d="M7.8 3.2H11.2M7.8 5H11.2" stroke="#F0F4F8" stroke-width="0.9"/><path d="M4 7C6 6.6 9 7 11 7.5M5 8.5L10 9" stroke="#A098E0" stroke-width="1"/><path d="M1 8.5H5L6 9.5H9L10 8.5H14V14H1Z" fill="url(#tg)"/></svg>
<div class="t" style="left:27px;top:325px;font-size:11px;color:#3F5CFF;text-decoration:underline;text-decoration-skip-ink:none">Графики работы</div>
<svg style="position:absolute;left:9px;top:323px" width="15" height="14" viewBox="0 0 15 14"><defs><linearGradient id="tg" x1="0" y1="0" x2="0" y2="1"><stop offset="0" stop-color="#FCE050"/><stop offset="1" stop-color="#DCA428"/></linearGradient></defs><rect x="1" y="3" width="1.6" height="7" fill="#F0A830"/><rect x="12.4" y="3" width="1.6" height="7" fill="#F0A830"/><rect x="2.5" y="0.5" width="5.5" height="9" fill="#fff" stroke="#7A8A9C"/><rect x="3" y="1" width="4.5" height="4.5" fill="#8C9CAC"/><path d="M3.8 2.2H5.8M3.8 4.2H5.8" stroke="#F0F4F8" stroke-width="0.9"/><rect x="6.5" y="1.5" width="6" height="8" fill="#fff" stroke="#7A8A9C"/><rect x="7" y="2" width="5" height="4" fill="#8C9CAC"/><path d="M7.8 3.2H11.2M7.8 5H11.2" stroke="#F0F4F8" stroke-width="0.9"/><path d="M4 7C6 6.6 9 7 11 7.5M5 8.5L10 9" stroke="#A098E0" stroke-width="1"/><path d="M1 8.5H5L6 9.5H9L10 8.5H14V14H1Z" fill="url(#tg)"/></svg>
<div class="t" style="left:27px;top:349px;font-size:11px;color:#3F5CFF;text-decoration:underline;text-decoration-skip-ink:none">Контрагенты</div>
<svg style="position:absolute;left:9px;top:347px" width="15" height="14" viewBox="0 0 15 14"><defs><linearGradient id="tg" x1="0" y1="0" x2="0" y2="1"><stop offset="0" stop-color="#FCE050"/><stop offset="1" stop-color="#DCA428"/></linearGradient></defs><rect x="1" y="3" width="1.6" height="7" fill="#F0A830"/><rect x="12.4" y="3" width="1.6" height="7" fill="#F0A830"/><rect x="2.5" y="0.5" width="5.5" height="9" fill="#fff" stroke="#7A8A9C"/><rect x="3" y="1" width="4.5" height="4.5" fill="#8C9CAC"/><path d="M3.8 2.2H5.8M3.8 4.2H5.8" stroke="#F0F4F8" stroke-width="0.9"/><rect x="6.5" y="1.5" width="6" height="8" fill="#fff" stroke="#7A8A9C"/><rect x="7" y="2" width="5" height="4" fill="#8C9CAC"/><path d="M7.8 3.2H11.2M7.8 5H11.2" stroke="#F0F4F8" stroke-width="0.9"/><path d="M4 7C6 6.6 9 7 11 7.5M5 8.5L10 9" stroke="#A098E0" stroke-width="1"/><path d="M1 8.5H5L6 9.5H9L10 8.5H14V14H1Z" fill="url(#tg)"/></svg>
<div class="t" style="left:27px;top:373px;font-size:11px;color:#3F5CFF;text-decoration:underline;text-decoration-skip-ink:none">Договоры контрагентов</div>
<svg style="position:absolute;left:9px;top:371px" width="15" height="14" viewBox="0 0 15 14"><defs><linearGradient id="tg" x1="0" y1="0" x2="0" y2="1"><stop offset="0" stop-color="#FCE050"/><stop offset="1" stop-color="#DCA428"/></linearGradient></defs><rect x="1" y="3" width="1.6" height="7" fill="#F0A830"/><rect x="12.4" y="3" width="1.6" height="7" fill="#F0A830"/><rect x="2.5" y="0.5" width="5.5" height="9" fill="#fff" stroke="#7A8A9C"/><rect x="3" y="1" width="4.5" height="4.5" fill="#8C9CAC"/><path d="M3.8 2.2H5.8M3.8 4.2H5.8" stroke="#F0F4F8" stroke-width="0.9"/><rect x="6.5" y="1.5" width="6" height="8" fill="#fff" stroke="#7A8A9C"/><rect x="7" y="2" width="5" height="4" fill="#8C9CAC"/><path d="M7.8 3.2H11.2M7.8 5H11.2" stroke="#F0F4F8" stroke-width="0.9"/><path d="M4 7C6 6.6 9 7 11 7.5M5 8.5L10 9" stroke="#A098E0" stroke-width="1"/><path d="M1 8.5H5L6 9.5H9L10 8.5H14V14H1Z" fill="url(#tg)"/></svg>
<div class="t" style="left:27px;top:397px;font-size:11px;color:#3F5CFF;text-decoration:underline;text-decoration-skip-ink:none">Блокировка ТА</div>
<svg style="position:absolute;left:9px;top:395px" width="15" height="14" viewBox="0 0 15 14"><defs><linearGradient id="tg" x1="0" y1="0" x2="0" y2="1"><stop offset="0" stop-color="#FCE050"/><stop offset="1" stop-color="#DCA428"/></linearGradient></defs><rect x="1" y="3" width="1.6" height="7" fill="#F0A830"/><rect x="12.4" y="3" width="1.6" height="7" fill="#F0A830"/><rect x="2.5" y="0.5" width="5.5" height="9" fill="#fff" stroke="#7A8A9C"/><rect x="3" y="1" width="4.5" height="4.5" fill="#8C9CAC"/><path d="M3.8 2.2H5.8M3.8 4.2H5.8" stroke="#F0F4F8" stroke-width="0.9"/><rect x="6.5" y="1.5" width="6" height="8" fill="#fff" stroke="#7A8A9C"/><rect x="7" y="2" width="5" height="4" fill="#8C9CAC"/><path d="M7.8 3.2H11.2M7.8 5H11.2" stroke="#F0F4F8" stroke-width="0.9"/><path d="M4 7C6 6.6 9 7 11 7.5M5 8.5L10 9" stroke="#A098E0" stroke-width="1"/><path d="M1 8.5H5L6 9.5H9L10 8.5H14V14H1Z" fill="url(#tg)"/></svg>
<div class="t" style="left:8px;top:431px;font-size:11px;color:#8684A4;-webkit-text-stroke:0.35px #8684A4">Документы</div>
<div class="t" style="left:27px;top:456px;font-size:11px;color:#3F5CFF;text-decoration:underline;text-decoration-skip-ink:none">Учет кадров организаций</div>
<svg style="position:absolute;left:10px;top:454px" width="12" height="15" viewBox="0 0 12 15"><rect x="0.5" y="0.5" width="11" height="14" fill="#3A9A4A"/><rect x="2" y="2" width="10" height="13" fill="#4CB85C" stroke="#2A7A3A" stroke-width="0.6"/><rect x="0" y="3" width="2" height="10" fill="#C8E0C8"/><path d="M4 6H8M4 10H8" stroke="#1A5A2A" stroke-width="1.2"/><path d="M8 6H10M8 10H10" stroke="#D8F0D8" stroke-width="1"/></svg>
<div class="t" style="left:27px;top:480px;font-size:11px;color:#3F5CFF;text-decoration:underline;text-decoration-skip-ink:none">Прием на работу в организацию</div>
<svg style="position:absolute;left:10px;top:479px" width="12" height="14" viewBox="0 0 12 14"><path d="M0.5 0.5H8L11.5 4V13.5H0.5Z" fill="#fff" stroke="#7A8494"/><path d="M8 0.5V4H11.5" fill="#E8E8F0" stroke="#9AA0AC" stroke-width="0.6"/><path d="M2.5 2.5H5M2.5 4.5H5" stroke="#8878B8" stroke-width="0.8"/><rect x="2.5" y="6.5" width="7" height="4" fill="#fff" stroke="#8070B0"/><path d="M6 6.5V10.5" stroke="#8070B0"/><path d="M2.5 12H9.5" stroke="#8878B8" stroke-width="0.8"/></svg>
<div class="t" style="left:27px;top:504px;font-size:11px;color:#3F5CFF;text-decoration:underline;text-decoration-skip-ink:none">Кадровые перемещения организаций</div>
<svg style="position:absolute;left:10px;top:503px" width="12" height="14" viewBox="0 0 12 14"><path d="M0.5 0.5H8L11.5 4V13.5H0.5Z" fill="#fff" stroke="#7A8494"/><path d="M8 0.5V4H11.5" fill="#E8E8F0" stroke="#9AA0AC" stroke-width="0.6"/><path d="M2.5 2.5H5M2.5 4.5H5" stroke="#8878B8" stroke-width="0.8"/><rect x="2.5" y="6.5" width="7" height="4" fill="#fff" stroke="#8070B0"/><path d="M6 6.5V10.5" stroke="#8070B0"/><path d="M2.5 12H9.5" stroke="#8878B8" stroke-width="0.8"/></svg>
<div class="t" style="left:27px;top:528px;font-size:11px;color:#3F5CFF;text-decoration:underline;text-decoration-skip-ink:none">Начисление отпуска</div>
<svg style="position:absolute;left:10px;top:527px" width="12" height="14" viewBox="0 0 12 14"><path d="M0.5 0.5H8L11.5 4V13.5H0.5Z" fill="#fff" stroke="#7A8494"/><path d="M8 0.5V4H11.5" fill="#E8E8F0" stroke="#9AA0AC" stroke-width="0.6"/><path d="M2.5 2.5H5M2.5 4.5H5" stroke="#8878B8" stroke-width="0.8"/><rect x="2.5" y="6.5" width="7" height="4" fill="#fff" stroke="#8070B0"/><path d="M6 6.5V10.5" stroke="#8070B0"/><path d="M2.5 12H9.5" stroke="#8878B8" stroke-width="0.8"/></svg>
<div class="t" style="left:27px;top:552px;font-size:11px;color:#3F5CFF;text-decoration:underline;text-decoration-skip-ink:none">Начисление по больничному листу</div>
<svg style="position:absolute;left:10px;top:551px" width="12" height="14" viewBox="0 0 12 14"><path d="M0.5 0.5H8L11.5 4V13.5H0.5Z" fill="#fff" stroke="#7A8494"/><path d="M8 0.5V4H11.5" fill="#E8E8F0" stroke="#9AA0AC" stroke-width="0.6"/><path d="M2.5 2.5H5M2.5 4.5H5" stroke="#8878B8" stroke-width="0.8"/><rect x="2.5" y="6.5" width="7" height="4" fill="#fff" stroke="#8070B0"/><path d="M6 6.5V10.5" stroke="#8070B0"/><path d="M2.5 12H9.5" stroke="#8878B8" stroke-width="0.8"/></svg>
<div class="t" style="left:27px;top:576px;font-size:11px;color:#3F5CFF;text-decoration:underline;text-decoration-skip-ink:none">Невыходы и одноразовые выплаты</div>
<svg style="position:absolute;left:10px;top:575px" width="12" height="14" viewBox="0 0 12 14"><path d="M0.5 0.5H8L11.5 4V13.5H0.5Z" fill="#fff" stroke="#7A8494"/><path d="M8 0.5V4H11.5" fill="#E8E8F0" stroke="#9AA0AC" stroke-width="0.6"/><path d="M2.5 2.5H5M2.5 4.5H5" stroke="#8878B8" stroke-width="0.8"/><rect x="2.5" y="6.5" width="7" height="4" fill="#fff" stroke="#8070B0"/><path d="M6 6.5V10.5" stroke="#8070B0"/><path d="M2.5 12H9.5" stroke="#8878B8" stroke-width="0.8"/></svg>
<div class="t" style="left:27px;top:600px;font-size:11px;color:#3F5CFF;text-decoration:underline;text-decoration-skip-ink:none">Оплата по среднему заработку</div>
<svg style="position:absolute;left:10px;top:599px" width="12" height="14" viewBox="0 0 12 14"><path d="M0.5 0.5H8L11.5 4V13.5H0.5Z" fill="#fff" stroke="#7A8494"/><path d="M8 0.5V4H11.5" fill="#E8E8F0" stroke="#9AA0AC" stroke-width="0.6"/><path d="M2.5 2.5H5M2.5 4.5H5" stroke="#8878B8" stroke-width="0.8"/><rect x="2.5" y="6.5" width="7" height="4" fill="#fff" stroke="#8070B0"/><path d="M6 6.5V10.5" stroke="#8070B0"/><path d="M2.5 12H9.5" stroke="#8878B8" stroke-width="0.8"/></svg>
<div class="t" style="left:27px;top:624px;font-size:11px;color:#3F5CFF;text-decoration:underline;text-decoration-skip-ink:none">Увольнение из организации</div>
<svg style="position:absolute;left:10px;top:623px" width="12" height="14" viewBox="0 0 12 14"><path d="M0.5 0.5H8L11.5 4V13.5H0.5Z" fill="#fff" stroke="#7A8494"/><path d="M8 0.5V4H11.5" fill="#E8E8F0" stroke="#9AA0AC" stroke-width="0.6"/><path d="M2.5 2.5H5M2.5 4.5H5" stroke="#8878B8" stroke-width="0.8"/><rect x="2.5" y="6.5" width="7" height="4" fill="#fff" stroke="#8070B0"/><path d="M6 6.5V10.5" stroke="#8070B0"/><path d="M2.5 12H9.5" stroke="#8878B8" stroke-width="0.8"/></svg>
<div class="t" style="left:27px;top:648px;font-size:11px;color:#3F5CFF;text-decoration:underline;text-decoration-skip-ink:none">Возврат на работу в организацию</div>
<svg style="position:absolute;left:10px;top:647px" width="12" height="14" viewBox="0 0 12 14"><path d="M0.5 0.5H8L11.5 4V13.5H0.5Z" fill="#fff" stroke="#7A8494"/><path d="M8 0.5V4H11.5" fill="#E8E8F0" stroke="#9AA0AC" stroke-width="0.6"/><path d="M2.5 2.5H5M2.5 4.5H5" stroke="#8878B8" stroke-width="0.8"/><rect x="2.5" y="6.5" width="7" height="4" fill="#fff" stroke="#8070B0"/><path d="M6 6.5V10.5" stroke="#8070B0"/><path d="M2.5 12H9.5" stroke="#8878B8" stroke-width="0.8"/></svg>
<div class="t" style="left:27px;top:672px;font-size:11px;color:#3F5CFF;text-decoration:underline;text-decoration-skip-ink:none">Замены организаций</div>
<svg style="position:absolute;left:10px;top:671px" width="12" height="14" viewBox="0 0 12 14"><path d="M0.5 0.5H8L11.5 4V13.5H0.5Z" fill="#fff" stroke="#7A8494"/><path d="M8 0.5V4H11.5" fill="#E8E8F0" stroke="#9AA0AC" stroke-width="0.6"/><path d="M2.5 2.5H5M2.5 4.5H5" stroke="#8878B8" stroke-width="0.8"/><rect x="2.5" y="6.5" width="7" height="4" fill="#fff" stroke="#8070B0"/><path d="M6 6.5V10.5" stroke="#8070B0"/><path d="M2.5 12H9.5" stroke="#8878B8" stroke-width="0.8"/></svg>
<div class="t" style="left:8px;top:706px;font-size:11px;color:#8684A4;-webkit-text-stroke:0.35px #8684A4">Отчеты</div>
<div class="t" style="left:27px;top:731px;font-size:11px;color:#3F5CFF;text-decoration:underline;text-decoration-skip-ink:none">Списки работников организации</div>
<svg style="position:absolute;left:10px;top:730px" width="11" height="11" viewBox="0 0 11 11"><circle cx="5.5" cy="5.5" r="5.2" fill="#FFFF60" stroke="#6A7A9A" stroke-width="0.6"/><path d="M5.5 5.5L5.5 0.3A5.2 5.2 0 0 0 0.9 3Z" fill="#20A050"/><path d="M5.5 5.5L5.5 0.3A5.2 5.2 0 0 1 10.7 5.5Z" fill="#FF5040"/><path d="M5.5 5.5L10.7 5.5A5.2 5.2 0 0 1 5.5 10.7Z" fill="#2040FF"/></svg>
<div style="left:249px;top:147px;width:1px;height:734px;background:#F5F1E9"></div>
<div style="left:255px;top:98px;width:1px;height:783px;background:#888"></div>
<div style="left:256px;top:98px;width:1px;height:783px;background:#666"></div>
<div style="left:255px;top:98px;width:1653px;height:2px;background:#707070"></div>
<div style="left:257px;top:100px;width:1651px;height:1px;background:#fff"></div>
<div style="left:257px;top:101px;width:1651px;height:17px;background:#CBCBCB"></div>
<div style="left:257px;top:118px;width:1651px;height:1px;background:#7A7A7A"></div>
<div class="t" style="left:278px;top:104px;font-size:12px;font-weight:bold;color:#3A3020">Звіт "Повернення на роботу"</div>
<div style="left:257px;top:119px;width:1651px;height:24px;background:#ECE5DA"></div>
<div style="left:257px;top:143px;width:1651px;height:1px;background:#B5AC88"></div>
<div style="left:257px;top:144px;width:1651px;height:737px;background:#FFFAF0"></div>
<div style="left:1862px;top:111px;width:8px;height:3px;background:#202020"></div>
<svg style="position:absolute;left:1879px;top:103px" width="13" height="11" viewBox="0 0 13 11"><rect x="0.5" y="3.5" width="8" height="7" fill="none" stroke="#202020"/><path d="M3.5 3.5V0.5H11.5V7.5H8.5" fill="none" stroke="#202020"/></svg>
<svg style="position:absolute;left:1901px;top:104px" width="8" height="9" viewBox="0 0 8 9"><path d="M0.5 0.5L8 8.5M8 0.5L0.5 8.5" stroke="#202020" stroke-width="2"/></svg>
<svg style="position:absolute;left:260px;top:101px" width="13" height="14" viewBox="0 0 13 14"><path d="M0.5 0.5H9.5L12.5 3.5V13.5H0.5Z" fill="#fff" stroke="#6A88A4"/><path d="M9.5 0.5V3.5H12.5" fill="#C8DCEC" stroke="#8AAAC4" stroke-width="0.8"/><path d="M2 2V9.5H11" stroke="#B06060" fill="none" stroke-width="0.8"/><rect x="4" y="4" width="2" height="5.5" fill="#F02020"/><rect x="7" y="5" width="2" height="4.5" fill="#20A020"/><path d="M2 11H11" stroke="#A8C4DC"/></svg>
<div class="t" style="left:261px;top:125px;font-size:11.5px;color:#3A3020">Дії</div>
<svg style="position:absolute;left:279px;top:130px" width="6" height="4" viewBox="0 0 6 4"><path d="M0 0H6L3 3.5Z" fill="#5A4A20"/></svg>
<div style="left:289px;top:121px;width:1px;height:20px;background:linear-gradient(#ECE5DA,#C9BFA0 30%,#C9BFA0 70%,#ECE5DA)"></div>
<div style="left:290px;top:121px;width:1px;height:20px;background:#FFFFFF80"></div>
<svg style="position:absolute;left:300px;top:126px" width="10" height="12" viewBox="0 0 10 12"><path d="M0.5 0.5L9.5 6L0.5 11.5Z" fill="#2E9A2E"/><path d="M0.5 0.5L9.5 6L0.5 11.5Z" fill="none" stroke="#1A6A1A" stroke-width="0.6"/></svg>
<div class="t" style="left:313px;top:125px;font-size:12px;font-weight:bold;color:#3A3020">Сформувати</div>
<div style="left:393px;top:121px;width:1px;height:20px;background:linear-gradient(#ECE5DA,#C9BFA0 30%,#C9BFA0 70%,#ECE5DA)"></div>
<div style="left:394px;top:121px;width:1px;height:20px;background:#FFFFFF80"></div>
<svg style="position:absolute;left:400px;top:124px" width="15" height="15" viewBox="0 0 15 15"><path d="M0.5 1.5H10.5V14.5H0.5Z" fill="#F4F8FC" stroke="#8AA0B4"/><path d="M2 4H8M2 6H8M2 8H7M2 10H6" stroke="#9AB0C4"/><path d="M4 5L14 14" stroke="#604030" stroke-width="1.6"/><path d="M11 0.5V3.5M9.5 2H12.5M13 4.5V6.5" stroke="#E04040" stroke-width="1"/></svg>
<div class="t" style="left:418px;top:125px;font-size:11.3px;color:#3A3020">Конструктор настройок...</div>
<div style="left:553px;top:121px;width:1px;height:20px;background:linear-gradient(#ECE5DA,#C9BFA0 30%,#C9BFA0 70%,#ECE5DA)"></div>
<div style="left:554px;top:121px;width:1px;height:20px;background:#FFFFFF80"></div>
<div class="t" style="left:561px;top:125px;font-size:11.3px;color:#3A3020">Настройки...</div>
<div style="left:631px;top:121px;width:1px;height:20px;background:linear-gradient(#ECE5DA,#C9BFA0 30%,#C9BFA0 70%,#ECE5DA)"></div>
<div style="left:632px;top:121px;width:1px;height:20px;background:#FFFFFF80"></div>
<svg style="position:absolute;left:637px;top:123px" width="16" height="16" viewBox="0 0 16 16"><path d="M4.5 0.5H12.5V12.5H4.5Z" fill="#D8DCE0" stroke="#B0B8C0"/><path d="M6 3H11M6 5H11M6 7H11" stroke="#C0C4C8"/><path d="M0.5 9L5 6V12Z" fill="#A8B8A8"/><path d="M6 15.5L10 11L14.5 15.5Z" fill="#C8C8B8"/></svg>
<svg style="position:absolute;left:661px;top:123px" width="16" height="16" viewBox="0 0 16 16"><path d="M2.5 0.5H10.5V12.5H2.5Z" fill="#F4F8FC" stroke="#7A90A8"/><path d="M4 3H9M4 5H9M4 7H9" stroke="#9AB0C4"/><path d="M15.5 5L10 11H14Z" fill="#2A9A3A"/><path d="M0.5 15.5L4.5 10.5L8.5 15.5Z" fill="#F0C040" stroke="#B08820" stroke-width="0.6"/></svg>
<div style="left:682px;top:121px;width:1px;height:20px;background:linear-gradient(#ECE5DA,#C9BFA0 30%,#C9BFA0 70%,#ECE5DA)"></div>
<div style="left:683px;top:121px;width:1px;height:20px;background:#FFFFFF80"></div>
<svg style="position:absolute;left:689px;top:123px" width="16" height="16" viewBox="0 0 16 16"><circle cx="8" cy="8" r="7.3" fill="#F4B860" stroke="#A88440"/><circle cx="8" cy="6.5" r="5" fill="#F8D8A0" opacity="0.5"/><text x="4.6" y="12.5" font-family="Liberation Sans" font-weight="bold" font-size="11" fill="#6A4A20">?</text></svg>
<div style="left:265px;top:152px;width:826px;height:174px;background:#fff;border:1px solid #B5AC88"></div>
<div style="left:266px;top:153px;width:422px;height:20px;background:#F4F1DF"></div>
<div style="left:688px;top:153px;width:200px;height:20px;background:#F4F1DF"></div>
<div style="left:889px;top:153px;width:201px;height:20px;background:#D0CCB8"></div>
<div style="left:266px;top:173px;width:824px;height:1px;background:#B5AC88"></div>
<div style="left:266px;top:192px;width:824px;height:1px;background:#B5AC88"></div>
<div style="left:266px;top:211px;width:824px;height:1px;background:#B5AC88"></div>
<div style="left:286px;top:153px;width:1px;height:58px;background:#B5AC88"></div>
<div style="left:687px;top:153px;width:1px;height:58px;background:#B5AC88"></div>
<div style="left:888px;top:153px;width:1px;height:39px;background:#B5AC88"></div>
<div class="t" style="left:291px;top:158px;font-size:11px;color:#3A3020">Параметр</div>
<div class="t" style="left:692px;top:158px;font-size:11px;color:#3A3020">Значення</div>
<div class="t" style="left:893px;top:158px;font-size:11px;color:#3A3020">Дата</div>
<div class="t" style="left:293px;top:178px;font-size:11px;color:#000">На дату</div>
<div class="t" style="left:692px;top:178px;font-size:11px;color:#000">Початок цього дня</div>
<div class="t" style="left:893px;top:178px;font-size:11px;color:#000">09.10.2025</div>
<div class="t" style="left:293px;top:197px;font-size:11px;color:#000">Аналізуємо по дату</div>
<div class="t" style="left:692px;top:197px;font-size:11px;color:#000">Довільна дата</div>
<div style="left:888px;top:192px;width:202px;height:19px;background:#5166C0;outline:1px dotted #E8D880;outline-offset:-1px"></div>
<div class="t" style="left:893px;top:197px;font-size:11px;color:#fff">01.11.2026</div>
<svg style="position:absolute;left:270px;top:176px" width="13" height="13" viewBox="0 0 13 13"><rect x="0.5" y="0.5" width="12" height="12" fill="#fff" stroke="#B5AC88"/><path d="M2.5 6.5L5 9L10 3.5" fill="none" stroke="#000" stroke-width="2"/></svg>
<svg style="position:absolute;left:270px;top:195px" width="13" height="13" viewBox="0 0 13 13"><rect x="0.5" y="0.5" width="12" height="12" fill="#fff" stroke="#B5AC88"/><path d="M2.5 6.5L5 9L10 3.5" fill="none" stroke="#000" stroke-width="2"/></svg>
<div style="left:1096px;top:152px;width:812px;height:174px;background:#fff;border:1px solid #B5AC88"></div>
<div style="left:1097px;top:153px;width:20px;height:20px;background:#F4F1DF"></div>
<div style="left:1118px;top:153px;width:790px;height:20px;background:#D0CCB8"></div>
<div style="left:1097px;top:173px;width:811px;height:1px;background:#B5AC88"></div>
<div style="left:1097px;top:192px;width:811px;height:1px;background:#B5AC88"></div>
<div style="left:1097px;top:211px;width:811px;height:1px;background:#B5AC88"></div>
<div style="left:1117px;top:153px;width:1px;height:58px;background:#B5AC88"></div>
<div class="t" style="left:1122px;top:158px;font-size:11px;color:#3A3020">Представлення</div>
<svg style="position:absolute;left:1127px;top:177px" width="10" height="10" viewBox="0 0 10 10"><circle cx="5" cy="5" r="4.3" fill="#fff" stroke="#909090"/><path d="M2.5 5H7.5" stroke="#707070"/></svg>
<div style="left:1141px;top:174px;width:34px;height:18px;background:#5166C0"></div>
<div class="t" style="left:1143px;top:179px;font-size:11px;color:#fff">Відбір</div>
<svg style="position:absolute;left:1101px;top:195px" width="13" height="13" viewBox="0 0 13 13"><rect x="0.5" y="0.5" width="12" height="12" fill="#fff" stroke="#B5AC88"/></svg>
<svg style="position:absolute;left:1162px;top:200px" width="11" height="5" viewBox="0 0 11 5"><rect x="0.5" y="0.5" width="10" height="4" rx="1.5" fill="#B0C8E0" stroke="#6A90B8"/></svg>
<div class="t" style="left:1181px;top:197px;font-size:11px;color:#000">Стан відсутності на роботі</div>
<div class="t" style="left:1409px;top:197px;font-size:11px;color:#000">Дорівнює</div>
<div class="t" style="left:1623px;top:197px;font-size:11px;color:#000">Отпуск по беременности и родам</div>
<div style="left:265px;top:331px;width:1643px;height:1px;background:#B5AC88"></div>
<div style="left:266px;top:332px;width:1625px;height:549px;background:#fff"></div>
<div style="left:265px;top:331px;width:1px;height:550px;background:#B5AC88"></div>
<div style="left:266px;top:332px;width:28px;height:549px;background:#FDF9EE"></div>
<div style="left:294px;top:332px;width:1px;height:549px;background:#B5AC88"></div>
<div style="left:266px;top:486px;width:1625px;height:1px;background:#A8A08A"></div>
<div style="left:1891px;top:332px;width:17px;height:549px;background:#F9F8F2;border-left:1px solid #B5AC88"></div>
<div style="left:1907px;top:332px;width:1px;height:549px;background:#ADA484"></div>
<div style="left:1892px;top:332px;width:15px;height:21px;background:linear-gradient(90deg,#FBFAF0,#EDE8D0 60%,#E2DCBC);border-bottom:1px solid #B5AC88"></div>
<svg style="position:absolute;left:1896px;top:338px" width="8" height="7" viewBox="0 0 8 7"><path d="M0 6.5H7.5L3.75 0Z" fill="#C8C4B4"/></svg>
<div style="left:1892px;top:353px;width:15px;height:390px;background:linear-gradient(90deg,#FBFAF0,#EFEACC 50%,#E2DCBC);border-bottom:1px solid #ADA484"></div>
<svg style="position:absolute;left:1897px;top:545px" width="5" height="5" viewBox="0 0 5 5"><circle cx="2.5" cy="2.5" r="2.2" fill="#D0CCB8"/><path d="M3.5 1.5A1.5 1.5 0 0 1 3.5 3.5" stroke="#F8F6E8" fill="none"/></svg>
<svg style="position:absolute;left:269px;top:378px" width="11" height="11" viewBox="0 0 11 11"><rect x="0.5" y="0.5" width="10" height="10" rx="1.2" fill="#FCFAF2" stroke="#C4BC9C"/><path d="M2 5.5H9" stroke="#3A2A10" stroke-width="1.3"/></svg>
<div style="left:274px;top:389px;width:1px;height:34px;background:#B5AC88"></div>
<div style="left:274px;top:423px;width:6px;height:1px;background:#B5AC88"></div>
<div class="t" style="left:300px;top:350px;font-size:24.3px;font-weight:bold;color:#000">Працівники, котрі незабаром вийдуть на роботу</div>
<div class="t" style="left:298px;top:392px;font-size:12.7px;color:#000">Параметри:</div>
<div class="t" style="left:383.5px;top:392px;font-size:13px;color:#000">На дату: 09.10.2025</div>
<div class="t" style="left:384px;top:409px;font-size:13px;color:#000">Аналізуємо по дату: 01.11.2026</div>
<div style="left:295px;top:436px;width:1379px;height:51px;background:#F3EBC7"></div>
<div style="left:295px;top:436px;width:1379px;height:1px;background:#D1C595"></div>
<div style="left:295px;top:453px;width:1379px;height:1px;background:#D1C595"></div>
<div style="left:1673px;top:436px;width:1px;height:291px;background:#D1C595"></div>
<div style="left:336px;top:453px;width:1px;height:33px;background:#D1C595"></div>
<div style="left:511px;top:453px;width:1px;height:33px;background:#D1C595"></div>
<div style="left:742px;top:453px;width:1px;height:33px;background:#D1C595"></div>
<div style="left:1036px;top:453px;width:1px;height:33px;background:#D1C595"></div>
<div style="left:1323px;top:453px;width:1px;height:33px;background:#D1C595"></div>
<div style="left:1393px;top:453px;width:1px;height:33px;background:#D1C595"></div>
<div style="left:1477px;top:453px;width:1px;height:33px;background:#D1C595"></div>
<div style="left:1561px;top:453px;width:1px;height:33px;background:#D1C595"></div>
<div class="t" style="left:298px;top:439px;font-size:13px;color:#000">Стан відсутності на роботі</div>
<div class="t" style="left:298px;top:456px;font-size:13px;color:#000">№</div>
<div class="t" style="left:339px;top:456px;font-size:13px;color:#000">Організація</div>
<div class="t" style="left:514px;top:456px;font-size:13px;color:#000">Працівник</div>
<div class="t" style="left:745px;top:456px;font-size:13px;color:#000">Підрозділ</div>
<div class="t" style="left:1039px;top:456px;font-size:13px;color:#000">Посада</div>
<div class="t" style="left:1326px;top:456px;font-size:13px;color:#000">Кількість</div>
<div class="t" style="left:1396px;top:456px;font-size:13px;color:#000">З дати</div>
<div class="t" style="left:1480px;top:456px;font-size:13px;color:#000">По дату</div>
<div class="t" style="left:1564px;top:456px;font-size:13px;color:#000">Наказ</div>
<div class="t" style="left:298px;top:472px;font-size:13px;color:#000">з/п</div>
<div class="t" style="left:1327px;top:472px;font-size:13px;color:#000">ставок</div>
<div style="left:295px;top:486px;width:1379px;height:1px;background:#D1C595"></div>
<div style="left:296px;top:487px;width:1377px;height:14px;background:#F7F0DA"></div>
<div class="t" style="left:297px;top:489px;font-size:11.2px;color:#000">Отпуск по уходу за ребенком</div>
<div style="left:295px;top:501px;width:1379px;height:1px;background:#D1C595"></div>
<div style="left:336px;top:502px;width:1px;height:14px;background:#D1C595"></div>
<div style="left:511px;top:502px;width:1px;height:14px;background:#D1C595"></div>
<div style="left:742px;top:502px;width:1px;height:14px;background:#D1C595"></div>
<div style="left:1036px;top:502px;width:1px;height:14px;background:#D1C595"></div>
<div style="left:1323px;top:502px;width:1px;height:14px;background:#D1C595"></div>
<div style="left:1393px;top:502px;width:1px;height:14px;background:#D1C595"></div>
<div style="left:1477px;top:502px;width:1px;height:14px;background:#D1C595"></div>
<div style="left:1561px;top:502px;width:1px;height:14px;background:#D1C595"></div>
<div class="t" style="left:296px;top:504px;width:41px;text-align:center;font-size:10.86px;color:#000">1</div>
<div class="t" style="left:339px;top:504px;font-size:10.86px;color:#000">ПроТек Логістик ТОВ</div>
<div class="t" style="left:514px;top:504px;font-size:10.86px;color:#000">Бегман Дана Володимирівна</div>
<div class="t" style="left:745px;top:504px;font-size:10.86px;color:#000">Адміністрація</div>
<div class="t" style="left:1039px;top:504px;font-size:10.86px;color:#000">бухгалтер</div>
<div class="t" style="left:1323px;top:504px;width:68px;text-align:right;font-size:10.86px;color:#000">1,00</div>
<div class="t" style="left:1396px;top:504px;font-size:10.86px;color:#000">04.09.2023</div>
<div class="t" style="left:1480px;top:504px;font-size:10.86px;color:#000">29.06.2026</div>
<div class="t" style="left:1564px;top:504px;font-size:10.86px;color:#000">ПЛ000000283</div>
<div style="left:295px;top:516px;width:1379px;height:1px;background:#D1C595"></div>
<div style="left:336px;top:517px;width:1px;height:14px;background:#D1C595"></div>
<div style="left:511px;top:517px;width:1px;height:14px;background:#D1C595"></div>
<div style="left:742px;top:517px;width:1px;height:14px;background:#D1C595"></div>
<div style="left:1036px;top:517px;width:1px;height:14px;background:#D1C595"></div>
<div style="left:1323px;top:517px;width:1px;height:14px;background:#D1C595"></div>
<div style="left:1393px;top:517px;width:1px;height:14px;background:#D1C595"></div>
<div style="left:1477px;top:517px;width:1px;height:14px;background:#D1C595"></div>
<div style="left:1561px;top:517px;width:1px;height:14px;background:#D1C595"></div>
<div class="t" style="left:296px;top:519px;width:41px;text-align:center;font-size:10.86px;color:#000">2</div>
<div class="t" style="left:339px;top:519px;font-size:10.86px;color:#000">ПроТек Логістик ТОВ</div>
<div class="t" style="left:514px;top:519px;font-size:10.86px;color:#000">Пінчук Богдана Валеріївна</div>
<div class="t" style="left:745px;top:519px;font-size:10.86px;color:#000">Відділ збуту бакалії</div>
<div class="t" style="left:1039px;top:519px;font-size:10.86px;color:#000">агент торговельний</div>
<div class="t" style="left:1323px;top:519px;width:68px;text-align:right;font-size:10.86px;color:#000">1,00</div>
<div class="t" style="left:1396px;top:519px;font-size:10.86px;color:#000">03.11.2023</div>
<div class="t" style="left:1480px;top:519px;font-size:10.86px;color:#000">12.09.2026</div>
<div class="t" style="left:1564px;top:519px;font-size:10.86px;color:#000">ПЛ000000354</div>
<div style="left:295px;top:531px;width:1379px;height:1px;background:#D1C595"></div>
<div style="left:336px;top:532px;width:1px;height:14px;background:#D1C595"></div>
<div style="left:511px;top:532px;width:1px;height:14px;background:#D1C595"></div>
<div style="left:742px;top:532px;width:1px;height:14px;background:#D1C595"></div>
<div style="left:1036px;top:532px;width:1px;height:14px;background:#D1C595"></div>
<div style="left:1323px;top:532px;width:1px;height:14px;background:#D1C595"></div>
<div style="left:1393px;top:532px;width:1px;height:14px;background:#D1C595"></div>
<div style="left:1477px;top:532px;width:1px;height:14px;background:#D1C595"></div>
<div style="left:1561px;top:532px;width:1px;height:14px;background:#D1C595"></div>
<div class="t" style="left:296px;top:534px;width:41px;text-align:center;font-size:10.86px;color:#000">3</div>
<div class="t" style="left:339px;top:534px;font-size:10.86px;color:#000">ПроТек Логістик ТОВ</div>
<div class="t" style="left:514px;top:534px;font-size:10.86px;color:#000">Крутій Надія Ярославівна</div>
<div class="t" style="left:745px;top:534px;font-size:10.86px;color:#000">відділ роздрібного продажу м.Червоноград</div>
<div class="t" style="left:1039px;top:534px;font-size:10.86px;color:#000"></div>
<div class="t" style="left:1396px;top:534px;font-size:10.86px;color:#000">03.05.2023</div>
<div class="t" style="left:1480px;top:534px;font-size:10.86px;color:#000">07.03.2026</div>
<div class="t" style="left:1564px;top:534px;font-size:10.86px;color:#000">ПЛ000000183</div>
<div style="left:295px;top:546px;width:1379px;height:1px;background:#D1C595"></div>
<div style="left:336px;top:547px;width:1px;height:14px;background:#D1C595"></div>
<div style="left:511px;top:547px;width:1px;height:14px;background:#D1C595"></div>
<div style="left:742px;top:547px;width:1px;height:14px;background:#D1C595"></div>
<div style="left:1036px;top:547px;width:1px;height:14px;background:#D1C595"></div>
<div style="left:1323px;top:547px;width:1px;height:14px;background:#D1C595"></div>
<div style="left:1393px;top:547px;width:1px;height:14px;background:#D1C595"></div>
<div style="left:1477px;top:547px;width:1px;height:14px;background:#D1C595"></div>
<div style="left:1561px;top:547px;width:1px;height:14px;background:#D1C595"></div>
<div class="t" style="left:296px;top:549px;width:41px;text-align:center;font-size:10.86px;color:#000">4</div>
<div class="t" style="left:339px;top:549px;font-size:10.86px;color:#000">ПроТек Логістик ТОВ</div>
<div class="t" style="left:514px;top:549px;font-size:10.86px;color:#000">Ліннік Ярослава Олександрівна</div>
<div class="t" style="left:745px;top:549px;font-size:10.86px;color:#000">Адміністрація</div>
<div class="t" style="left:1039px;top:549px;font-size:10.86px;color:#000">менеджер з фінансів</div>
<div class="t" style="left:1323px;top:549px;width:68px;text-align:right;font-size:10.86px;color:#000">0,25</div>
<div class="t" style="left:1396px;top:549px;font-size:10.86px;color:#000">20.06.2023</div>
<div class="t" style="left:1480px;top:549px;font-size:10.86px;color:#000">22.03.2026</div>
<div class="t" style="left:1564px;top:549px;font-size:10.86px;color:#000">ПЛ000000188</div>
<div style="left:295px;top:561px;width:1379px;height:1px;background:#D1C595"></div>
<div style="left:336px;top:562px;width:1px;height:14px;background:#D1C595"></div>
<div style="left:511px;top:562px;width:1px;height:14px;background:#D1C595"></div>
<div style="left:742px;top:562px;width:1px;height:14px;background:#D1C595"></div>
<div style="left:1036px;top:562px;width:1px;height:14px;background:#D1C595"></div>
<div style="left:1323px;top:562px;width:1px;height:14px;background:#D1C595"></div>
<div style="left:1393px;top:562px;width:1px;height:14px;background:#D1C595"></div>
<div style="left:1477px;top:562px;width:1px;height:14px;background:#D1C595"></div>
<div style="left:1561px;top:562px;width:1px;height:14px;background:#D1C595"></div>
<div class="t" style="left:296px;top:564px;width:41px;text-align:center;font-size:10.86px;color:#000">5</div>
<div class="t" style="left:339px;top:564px;font-size:10.86px;color:#000">ПроТек Логістик ТОВ</div>
<div class="t" style="left:514px;top:564px;font-size:10.86px;color:#000">Мазо Вікторія Ігорівна</div>
<div class="t" style="left:745px;top:564px;font-size:10.86px;color:#000">планово-бюджетний&nbsp; відділ</div>
<div class="t" style="left:1039px;top:564px;font-size:10.86px;color:#000">аналітик консолідованої інформації</div>
<div class="t" style="left:1323px;top:564px;width:68px;text-align:right;font-size:10.86px;color:#000">1,00</div>
<div class="t" style="left:1396px;top:564px;font-size:10.86px;color:#000">04.08.2023</div>
<div class="t" style="left:1480px;top:564px;font-size:10.86px;color:#000">08.06.2026</div>
<div class="t" style="left:1564px;top:564px;font-size:10.86px;color:#000">ПЛ000000256</div>
<div style="left:295px;top:576px;width:1379px;height:1px;background:#D1C595"></div>
<div style="left:336px;top:577px;width:1px;height:14px;background:#D1C595"></div>
<div style="left:511px;top:577px;width:1px;height:14px;background:#D1C595"></div>
<div style="left:742px;top:577px;width:1px;height:14px;background:#D1C595"></div>
<div style="left:1036px;top:577px;width:1px;height:14px;background:#D1C595"></div>
<div style="left:1323px;top:577px;width:1px;height:14px;background:#D1C595"></div>
<div style="left:1393px;top:577px;width:1px;height:14px;background:#D1C595"></div>
<div style="left:1477px;top:577px;width:1px;height:14px;background:#D1C595"></div>
<div style="left:1561px;top:577px;width:1px;height:14px;background:#D1C595"></div>
<div class="t" style="left:296px;top:579px;width:41px;text-align:center;font-size:10.86px;color:#000">6</div>
<div class="t" style="left:339px;top:579px;font-size:10.86px;color:#000">ПроТек Логістик ТОВ</div>
<div class="t" style="left:514px;top:579px;font-size:10.86px;color:#000">Зобко Ганна Богданівна</div>
<div class="t" style="left:745px;top:579px;font-size:10.86px;color:#000">Адміністрація</div>
<div class="t" style="left:1039px;top:579px;font-size:10.86px;color:#000">касир</div>
<div class="t" style="left:1323px;top:579px;width:68px;text-align:right;font-size:10.86px;color:#000">1,00</div>
<div class="t" style="left:1396px;top:579px;font-size:10.86px;color:#000">15.09.2023</div>
<div class="t" style="left:1480px;top:579px;font-size:10.86px;color:#000">29.06.2026</div>
<div class="t" style="left:1564px;top:579px;font-size:10.86px;color:#000">ПЛ000000297</div>
<div style="left:295px;top:591px;width:1379px;height:1px;background:#D1C595"></div>
<div style="left:336px;top:592px;width:1px;height:14px;background:#D1C595"></div>
<div style="left:511px;top:592px;width:1px;height:14px;background:#D1C595"></div>
<div style="left:742px;top:592px;width:1px;height:14px;background:#D1C595"></div>
<div style="left:1036px;top:592px;width:1px;height:14px;background:#D1C595"></div>
<div style="left:1323px;top:592px;width:1px;height:14px;background:#D1C595"></div>
<div style="left:1393px;top:592px;width:1px;height:14px;background:#D1C595"></div>
<div style="left:1477px;top:592px;width:1px;height:14px;background:#D1C595"></div>
<div style="left:1561px;top:592px;width:1px;height:14px;background:#D1C595"></div>
<div class="t" style="left:296px;top:594px;width:41px;text-align:center;font-size:10.86px;color:#000">7</div>
<div class="t" style="left:339px;top:594px;font-size:10.86px;color:#000">ПроТек Логістик ТОВ</div>
<div class="t" style="left:514px;top:594px;font-size:10.86px;color:#000">Лісна Христина Федорівна</div>
<div class="t" style="left:745px;top:594px;font-size:10.86px;color:#000">відділ постачання</div>
<div class="t" style="left:1039px;top:594px;font-size:10.86px;color:#000">заступник начальника відділу постачання</div>
<div class="t" style="left:1323px;top:594px;width:68px;text-align:right;font-size:10.86px;color:#000">0,50</div>
<div class="t" style="left:1396px;top:594px;font-size:10.86px;color:#000">10.04.2023</div>
<div class="t" style="left:1480px;top:594px;font-size:10.86px;color:#000">27.01.2026</div>
<div class="t" style="left:1564px;top:594px;font-size:10.86px;color:#000">ПЛ000000089</div>
<div style="left:295px;top:606px;width:1379px;height:1px;background:#D1C595"></div>
<div style="left:336px;top:607px;width:1px;height:14px;background:#D1C595"></div>
<div style="left:511px;top:607px;width:1px;height:14px;background:#D1C595"></div>
<div style="left:742px;top:607px;width:1px;height:14px;background:#D1C595"></div>
<div style="left:1036px;top:607px;width:1px;height:14px;background:#D1C595"></div>
<div style="left:1323px;top:607px;width:1px;height:14px;background:#D1C595"></div>
<div style="left:1393px;top:607px;width:1px;height:14px;background:#D1C595"></div>
<div style="left:1477px;top:607px;width:1px;height:14px;background:#D1C595"></div>
<div style="left:1561px;top:607px;width:1px;height:14px;background:#D1C595"></div>
<div class="t" style="left:296px;top:609px;width:41px;text-align:center;font-size:10.86px;color:#000">8</div>
<div class="t" style="left:339px;top:609px;font-size:10.86px;color:#000">ПроТек Логістик ТОВ</div>
<div class="t" style="left:514px;top:609px;font-size:10.86px;color:#000">Юхновська Мар'яна Мирославівна</div>
<div class="t" style="left:745px;top:609px;font-size:10.86px;color:#000">Структурний підрозділ м.Дрогобич</div>
<div class="t" style="left:1039px;top:609px;font-size:10.86px;color:#000"></div>
<div class="t" style="left:1396px;top:609px;font-size:10.86px;color:#000">03.05.2023</div>
<div class="t" style="left:1480px;top:609px;font-size:10.86px;color:#000">20.02.2026</div>
<div class="t" style="left:1564px;top:609px;font-size:10.86px;color:#000">ПЛ000000123</div>
<div style="left:295px;top:621px;width:1379px;height:1px;background:#D1C595"></div>
<div style="left:296px;top:622px;width:1377px;height:14px;background:#F7F0DA"></div>
<div class="t" style="left:297px;top:624px;font-size:11.2px;color:#000">Отпуск по беременности и родам</div>
<div style="left:295px;top:636px;width:1379px;height:1px;background:#D1C595"></div>
<div style="left:336px;top:637px;width:1px;height:14px;background:#D1C595"></div>
<div style="left:511px;top:637px;width:1px;height:14px;background:#D1C595"></div>
<div style="left:742px;top:637px;width:1px;height:14px;background:#D1C595"></div>
<div style="left:1036px;top:637px;width:1px;height:14px;background:#D1C595"></div>
<div style="left:1323px;top:637px;width:1px;height:14px;background:#D1C595"></div>
<div style="left:1393px;top:637px;width:1px;height:14px;background:#D1C595"></div>
<div style="left:1477px;top:637px;width:1px;height:14px;background:#D1C595"></div>
<div style="left:1561px;top:637px;width:1px;height:14px;background:#D1C595"></div>
<div class="t" style="left:296px;top:639px;width:41px;text-align:center;font-size:10.86px;color:#000">9</div>
<div class="t" style="left:339px;top:639px;font-size:10.86px;color:#000">ПроТек Логістик ХАБ ТОВ</div>
<div class="t" style="left:514px;top:639px;font-size:10.86px;color:#000">Бурцева Соломія Юріївна</div>
<div class="t" style="left:745px;top:639px;font-size:10.86px;color:#000">Відділ збуту м. Тернопіль</div>
<div class="t" style="left:1039px;top:639px;font-size:10.86px;color:#000">агент торговельний</div>
<div class="t" style="left:1323px;top:639px;width:68px;text-align:right;font-size:10.86px;color:#000">1,00</div>
<div class="t" style="left:1396px;top:639px;font-size:10.86px;color:#000">01.08.2025</div>
<div class="t" style="left:1480px;top:639px;font-size:10.86px;color:#000">04.12.2025</div>
<div class="t" style="left:1564px;top:639px;font-size:10.86px;color:#000">05/ха</div>
<div style="left:295px;top:651px;width:1379px;height:1px;background:#D1C595"></div>
<div style="left:336px;top:652px;width:1px;height:14px;background:#D1C595"></div>
<div style="left:511px;top:652px;width:1px;height:14px;background:#D1C595"></div>
<div style="left:742px;top:652px;width:1px;height:14px;background:#D1C595"></div>
<div style="left:1036px;top:652px;width:1px;height:14px;background:#D1C595"></div>
<div style="left:1323px;top:652px;width:1px;height:14px;background:#D1C595"></div>
<div style="left:1393px;top:652px;width:1px;height:14px;background:#D1C595"></div>
<div style="left:1477px;top:652px;width:1px;height:14px;background:#D1C595"></div>
<div style="left:1561px;top:652px;width:1px;height:14px;background:#D1C595"></div>
<div class="t" style="left:293.5px;top:654px;width:41px;text-align:center;font-size:10.86px;color:#000">10</div>
<div class="t" style="left:339px;top:654px;font-size:10.86px;color:#000">ПроТек Логістик ХАБ ТОВ</div>
<div class="t" style="left:514px;top:654px;font-size:10.86px;color:#000">Черевата Ірина Богданівна</div>
<div class="t" style="left:745px;top:654px;font-size:10.86px;color:#000">Фінансовий відділ м. Тернопіль</div>
<div class="t" style="left:1039px;top:654px;font-size:10.86px;color:#000">менеджер з фінансів</div>
<div class="t" style="left:1323px;top:654px;width:68px;text-align:right;font-size:10.86px;color:#000">1,00</div>
<div class="t" style="left:1396px;top:654px;font-size:10.86px;color:#000">04.09.2025</div>
<div class="t" style="left:1480px;top:654px;font-size:10.86px;color:#000">07.01.2026</div>
<div class="t" style="left:1564px;top:654px;font-size:10.86px;color:#000">10/ха</div>
<div style="left:295px;top:666px;width:1379px;height:1px;background:#D1C595"></div>
<div style="left:336px;top:667px;width:1px;height:14px;background:#D1C595"></div>
<div style="left:511px;top:667px;width:1px;height:14px;background:#D1C595"></div>
<div style="left:742px;top:667px;width:1px;height:14px;background:#D1C595"></div>
<div style="left:1036px;top:667px;width:1px;height:14px;background:#D1C595"></div>
<div style="left:1323px;top:667px;width:1px;height:14px;background:#D1C595"></div>
<div style="left:1393px;top:667px;width:1px;height:14px;background:#D1C595"></div>
<div style="left:1477px;top:667px;width:1px;height:14px;background:#D1C595"></div>
<div style="left:1561px;top:667px;width:1px;height:14px;background:#D1C595"></div>
<div class="t" style="left:293.5px;top:669px;width:41px;text-align:center;font-size:10.86px;color:#000">11</div>
<div class="t" style="left:339px;top:669px;font-size:10.86px;color:#000">ПроТек Логістик ХАБ ТОВ</div>
<div class="t" style="left:514px;top:669px;font-size:10.86px;color:#000">Галицька Ірина Богданівна</div>
<div class="t" style="left:745px;top:669px;font-size:10.86px;color:#000">Відділ збуту м. Дрогобич</div>
<div class="t" style="left:1039px;top:669px;font-size:10.86px;color:#000">агент торговельний</div>
<div class="t" style="left:1323px;top:669px;width:68px;text-align:right;font-size:10.86px;color:#000">1,00</div>
<div class="t" style="left:1396px;top:669px;font-size:10.86px;color:#000">28.08.2025</div>
<div class="t" style="left:1480px;top:669px;font-size:10.86px;color:#000">31.12.2025</div>
<div class="t" style="left:1564px;top:669px;font-size:10.86px;color:#000">11/ха</div>
<div style="left:295px;top:681px;width:1379px;height:1px;background:#D1C595"></div>
<div style="left:296px;top:682px;width:1377px;height:14px;background:#F7F0DA"></div>
<div class="t" style="left:297px;top:684px;font-size:11.2px;color:#000">Мобилизован</div>
<div style="left:295px;top:696px;width:1379px;height:1px;background:#D1C595"></div>
<div style="left:336px;top:697px;width:1px;height:14px;background:#D1C595"></div>
<div style="left:511px;top:697px;width:1px;height:14px;background:#D1C595"></div>
<div style="left:742px;top:697px;width:1px;height:14px;background:#D1C595"></div>
<div style="left:1036px;top:697px;width:1px;height:14px;background:#D1C595"></div>
<div style="left:1323px;top:697px;width:1px;height:14px;background:#D1C595"></div>
<div style="left:1393px;top:697px;width:1px;height:14px;background:#D1C595"></div>
<div style="left:1477px;top:697px;width:1px;height:14px;background:#D1C595"></div>
<div style="left:1561px;top:697px;width:1px;height:14px;background:#D1C595"></div>
<div class="t" style="left:293.5px;top:699px;width:41px;text-align:center;font-size:10.86px;color:#000">12</div>
<div class="t" style="left:339px;top:699px;font-size:10.86px;color:#000">ПроТек Логістик ТОВ</div>
<div class="t" style="left:514px;top:699px;font-size:10.86px;color:#000">Тарасенко Юрій Вадимович</div>
<div class="t" style="left:745px;top:699px;font-size:10.86px;color:#000">відділ збуту ТМ "Немирів"</div>
<div class="t" style="left:1039px;top:699px;font-size:10.86px;color:#000">агент торговельний</div>
<div class="t" style="left:1323px;top:699px;width:68px;text-align:right;font-size:10.86px;color:#000">1,00</div>
<div class="t" style="left:1396px;top:699px;font-size:10.86px;color:#000">08.10.2025</div>
<div class="t" style="left:1480px;top:699px;font-size:10.86px;color:#000">31.10.2025</div>
<div class="t" style="left:1564px;top:699px;font-size:10.86px;color:#000">ПЛ000000090</div>
<div style="left:295px;top:711px;width:1379px;height:1px;background:#D1C595"></div>
<div style="left:336px;top:712px;width:1px;height:14px;background:#D1C595"></div>
<div style="left:511px;top:712px;width:1px;height:14px;background:#D1C595"></div>
<div style="left:742px;top:712px;width:1px;height:14px;background:#D1C595"></div>
<div style="left:1036px;top:712px;width:1px;height:14px;background:#D1C595"></div>
<div style="left:1323px;top:712px;width:1px;height:14px;background:#D1C595"></div>
<div style="left:1393px;top:712px;width:1px;height:14px;background:#D1C595"></div>
<div style="left:1477px;top:712px;width:1px;height:14px;background:#D1C595"></div>
<div style="left:1561px;top:712px;width:1px;height:14px;background:#D1C595"></div>
<div class="t" style="left:293.5px;top:714px;width:41px;text-align:center;font-size:10.86px;color:#000">13</div>
<div class="t" style="left:339px;top:714px;font-size:10.86px;color:#000">ПроТек Логістик ТОВ</div>
<div class="t" style="left:514px;top:714px;font-size:10.86px;color:#000">Іванець Олег Анатолійович</div>
<div class="t" style="left:745px;top:714px;font-size:10.86px;color:#000">Відділ збуту бакалії</div>
<div class="t" style="left:1039px;top:714px;font-size:10.86px;color:#000">мерчендайзер</div>
<div class="t" style="left:1323px;top:714px;width:68px;text-align:right;font-size:10.86px;color:#000">0,25</div>
<div class="t" style="left:1396px;top:714px;font-size:10.86px;color:#000">08.10.2025</div>
<div class="t" style="left:1480px;top:714px;font-size:10.86px;color:#000">31.10.2025</div>
<div class="t" style="left:1564px;top:714px;font-size:10.86px;color:#000">ПЛ000000089</div>
<div style="left:295px;top:726px;width:1379px;height:1px;background:#D1C595"></div>
<svg style="position:absolute;left:269px;top:489px" width="11" height="11" viewBox="0 0 11 11"><rect x="0.5" y="0.5" width="10" height="10" rx="1.2" fill="#FCFAF2" stroke="#C4BC9C"/><path d="M2 5.5H9" stroke="#3A2A10" stroke-width="1.3"/></svg>
<div style="left:274px;top:500px;width:1px;height:119px;background:#B5AC88"></div>
<div style="left:274px;top:619px;width:6px;height:1px;background:#B5AC88"></div>
<svg style="position:absolute;left:269px;top:624px" width="11" height="11" viewBox="0 0 11 11"><rect x="0.5" y="0.5" width="10" height="10" rx="1.2" fill="#FCFAF2" stroke="#C4BC9C"/><path d="M2 5.5H9" stroke="#3A2A10" stroke-width="1.3"/></svg>
<div style="left:274px;top:635px;width:1px;height:44px;background:#B5AC88"></div>
<div style="left:274px;top:679px;width:6px;height:1px;background:#B5AC88"></div>
<svg style="position:absolute;left:269px;top:684px" width="11" height="11" viewBox="0 0 11 11"><rect x="0.5" y="0.5" width="10" height="10" rx="1.2" fill="#FCFAF2" stroke="#C4BC9C"/><path d="M2 5.5H9" stroke="#3A2A10" stroke-width="1.3"/></svg>
<div style="left:274px;top:695px;width:1px;height:29px;background:#B5AC88"></div>
<div style="left:274px;top:724px;width:6px;height:1px;background:#B5AC88"></div>
<div style="left:266px;top:486px;width:1625px;height:1px;background:#A8A08A"></div></body></html>
